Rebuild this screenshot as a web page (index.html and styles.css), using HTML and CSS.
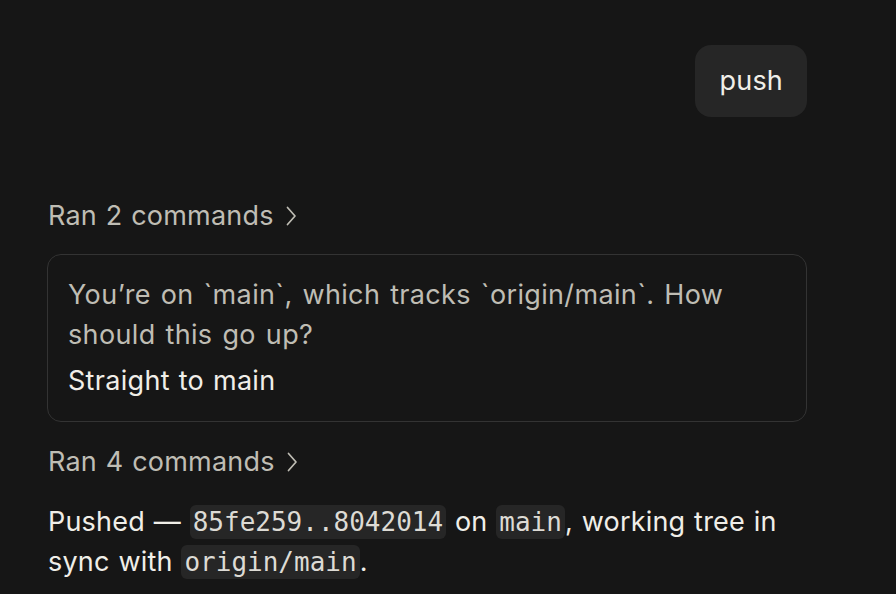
FILE: index.html
```html
<!DOCTYPE html>
<html lang="en">
<head>
<meta charset="utf-8">
<title>push</title>
<link rel="stylesheet" href="styles.css">
</head>
<body>
<main class="thread">
  <div class="user-row">
    <div class="bubble">push</div>
  </div>

  <button class="ran">Ran 2 commands <svg class="chev" width="12" height="20" viewBox="0 0 12 20"><path d="M2.5 1.5 L10 10 L2.5 18.5" fill="none" stroke="currentColor" stroke-width="1.7" stroke-linecap="round" stroke-linejoin="round"/></svg></button>

  <div class="card">
    <p class="question">You’re on `main`, which tracks `origin/main`. How should this go up?</p>
    <p class="answer">Straight to main</p>
  </div>

  <button class="ran">Ran 4 commands <svg class="chev" width="12" height="20" viewBox="0 0 12 20"><path d="M2.5 1.5 L10 10 L2.5 18.5" fill="none" stroke="currentColor" stroke-width="1.7" stroke-linecap="round" stroke-linejoin="round"/></svg></button>

  <p class="reply">Pushed — <code>85fe259..8042014</code> on <code>main</code>, working tree in sync with <code>origin/main</code>.</p>
</main>
</body>
</html>
```

FILE: styles.css
```css
html, body {
  margin: 0;
  padding: 0;
  background: #161616;
}
body {
  font-family: Inter, "Noto Sans", sans-serif;
  font-size: 27px;
  letter-spacing: 0.2px;
  word-spacing: 1px;
  line-height: 40px;
  color: #f0eee8;
}
.thread {
  width: 760px;
  margin-left: 47px;
  padding-top: 45px;
  display: flex;
  flex-direction: column;
}
.user-row {
  display: flex;
  justify-content: flex-end;
  margin-bottom: 78px;
}
.bubble {
  background: #262626;
  border-radius: 16px;
  padding: 16px 24px;
  color: #f0eee8;
}
.ran {
  align-self: flex-start;
  background: none;
  border: 0;
  padding: 0 0 0 1px;
  margin-top: 1px;
  font: inherit;
  letter-spacing: inherit;
  word-spacing: inherit;
  color: #bfbdb4;
  display: flex;
  align-items: center;
  gap: 11px;
  cursor: pointer;
}
.chev { display: block; }
.card {
  margin: 18px 0 19px;
  border: 1px solid #333333;
  border-radius: 14px;
  padding: 20px 20px 20px 20px;
}
.card p { margin: 0; }
.question {
  color: #bfbdb4;
  max-width: 670px;
  letter-spacing: 0.35px;
  word-spacing: 2px;
}
.answer {
  margin-top: 6px !important;
  color: #f0eee8;
  letter-spacing: 0.3px;
}
.reply {
  margin: 20px 0 0 1px;
  color: #f0eee8;
}
code {
  font-family: "DejaVu Sans Mono", monospace;
  font-size: 26px;
  letter-spacing: 0;
  word-spacing: 0;
  background: #262626;
  border-radius: 6px;
  padding: 2px 3px;
  color: #dddbd5;
}
```
